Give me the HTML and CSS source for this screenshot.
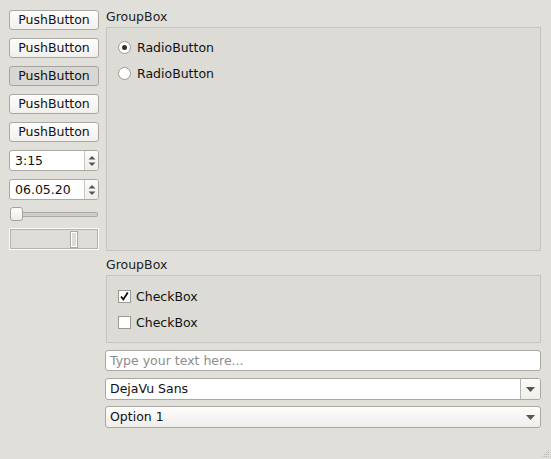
FILE: index.html
```html
<!DOCTYPE html>
<html>
<head>
<meta charset="utf-8">
<link rel="stylesheet" href="styles.css">
</head>
<body>
<div class="window">
  <div class="left">
    <button class="btn">PushButton</button>
    <button class="btn">PushButton</button>
    <button class="btn pressed">PushButton</button>
    <button class="btn">PushButton</button>
    <button class="btn">PushButton</button>
    <div class="spin"><span class="spin-text">3:15</span><span class="spin-arrows"><svg width="8" height="14" viewBox="0 0 8 14"><path d="M0.5 5.5 L4 2 L7.5 5.5Z" fill="#555"/><path d="M0.5 8.5 L4 12 L7.5 8.5Z" fill="#555"/></svg></span></div>
    <div class="spin"><span class="spin-text">06.05.20</span><span class="spin-arrows"><svg width="8" height="14" viewBox="0 0 8 14"><path d="M0.5 5.5 L4 2 L7.5 5.5Z" fill="#555"/><path d="M0.5 8.5 L4 12 L7.5 8.5Z" fill="#555"/></svg></span></div>
    <div class="slider"><div class="groove"></div><div class="handle"></div></div>
    <div class="scroll"><div class="scroll-handle"></div></div>
  </div>
  <div class="right">
    <div class="group">
      <div class="group-title">GroupBox</div>
      <div class="group-frame frame1">
        <label class="opt"><span class="radio checked"><span class="dot"></span></span>RadioButton</label>
        <label class="opt"><span class="radio"></span>RadioButton</label>
      </div>
    </div>
    <div class="group">
      <div class="group-title">GroupBox</div>
      <div class="group-frame frame2">
        <label class="opt"><span class="check"><svg width="11" height="11" viewBox="0 0 11 11"><path d="M2 5.5 L4.3 8.5 L8.8 1.5" fill="none" stroke="#111" stroke-width="1.8"/></svg></span>CheckBox</label>
        <label class="opt"><span class="check"></span>CheckBox</label>
      </div>
    </div>
    <div class="lineedit">Type your text here...</div>
    <div class="combo editable"><span class="combo-text">DejaVu Sans</span><span class="combo-btn"><svg width="9" height="5" viewBox="0 0 9 5"><path d="M0 0 H9 L4.5 5Z" fill="#555"/></svg></span></div>
    <div class="combo plain"><span class="combo-text">Option 1</span><span class="combo-arrow"><svg width="9" height="5" viewBox="0 0 9 5"><path d="M0 0 H9 L4.5 5Z" fill="#555"/></svg></span></div>
  </div>
  <svg class="grip" width="9" height="9" viewBox="0 0 9 9"><g fill="#b5b4ae"><rect x="7" y="1" width="1" height="1"/><rect x="5" y="3" width="1" height="1"/><rect x="7" y="3" width="1" height="1"/><rect x="3" y="5" width="1" height="1"/><rect x="5" y="5" width="1" height="1"/><rect x="7" y="5" width="1" height="1"/><rect x="1" y="7" width="1" height="1"/><rect x="3" y="7" width="1" height="1"/><rect x="5" y="7" width="1" height="1"/><rect x="7" y="7" width="1" height="1"/></g></svg>
</div>
</body>
</html>
```

FILE: styles.css
```css
html, body {
  margin: 0;
  padding: 0;
  background: #e0dfd9;
}
body {
  font-family: "DejaVu Sans", sans-serif;
  font-size: 12.5px;
  color: #111;
}
.window {
  position: relative;
  width: 551px;
  height: 459px;
  display: flex;
  box-sizing: border-box;
  padding: 10px 0 0 9px;
  gap: 6px;
}
.left {
  width: 90px;
  display: flex;
  flex-direction: column;
}
.btn {
  font: inherit;
  color: #111;
  height: 20px;
  margin: 0 0 8px 0;
  padding: 0 0 1px 0;
  border: 1px solid #a9a8a3;
  border-radius: 3px;
  background: linear-gradient(#fdfdfc, #f1f0ed);
  text-align: center;
}
.btn.pressed {
  background: #d8d7d2;
  border-color: #a5a49f;
}
.spin {
  height: 21px;
  box-sizing: border-box;
  border: 1px solid #a9a8a3;
  border-radius: 3px;
  background: #fff;
  display: flex;
  margin-bottom: 8px;
}
.spin-text {
  flex: 1;
  padding-left: 5px;
  line-height: 19px;
}
.spin-arrows {
  width: 13px;
  border-left: 1px solid #c8c7c2;
  background: linear-gradient(#fbfbfa, #eeede9);
  display: flex;
  align-items: center;
  justify-content: center;
  border-radius: 0 2px 2px 0;
}
.slider {
  position: relative;
  height: 16px;
  margin-top: -1px;
  margin-bottom: 5px;
}
.groove {
  position: absolute;
  left: 1px;
  right: 1px;
  top: 5px;
  height: 3px;
  border: 1px solid #a9a8a3;
  border-radius: 2px;
  background: #cfcec9;
}
.handle {
  position: absolute;
  left: 1px;
  top: 0;
  width: 11px;
  height: 12px;
  border: 1px solid #a3a29d;
  border-radius: 3px;
  background: linear-gradient(#fdfdfc, #eeede9);
}
.scroll {
  position: relative;
  height: 22px;
  box-sizing: border-box;
  border: 1px solid #fbfbfa;
  outline: 1px solid #b4b3ae;
  outline-offset: -2px;
  background: #dddcd6;
}
.scroll-handle {
  position: absolute;
  left: 60px;
  top: 2px;
  width: 6px;
  height: 15px;
  border: 1px solid #a9a8a3;
  outline: 1px solid #fff;
  outline-offset: -2px;
}
.right {
  width: 436px;
  display: flex;
  flex-direction: column;
}
.group-title {
  height: 17px;
  line-height: 14px;
  padding-left: 1px;
  color: #222;
}
.group-frame {
  margin-left: 1px;
  border: 1px solid #c6c5c0;
  background: #dcdbd5;
  box-sizing: border-box;
  padding: 10px 0 0 11px;
}
.frame1 {
  height: 224px;
  margin-bottom: 7px;
}
.frame2 {
  height: 68px;
  padding-top: 11px;
  margin-bottom: 7px;
}
.opt {
  display: flex;
  align-items: center;
  height: 18px;
  margin-bottom: 8px;
}
.radio {
  width: 11px;
  height: 11px;
  border: 1px solid #9a9994;
  border-radius: 50%;
  background: #fff;
  margin-right: 6px;
  display: flex;
  align-items: center;
  justify-content: center;
}
.radio .dot {
  width: 5px;
  height: 5px;
  border-radius: 50%;
  background: #333;
}
.check {
  width: 11px;
  height: 11px;
  border: 1px solid #9a9994;
  background: #fff;
  margin-right: 5px;
  display: flex;
  align-items: center;
  justify-content: center;
}
.frame2 .opt {
  margin-bottom: 8px;
}
.lineedit {
  height: 21px;
  box-sizing: border-box;
  border: 1px solid #a9a8a3;
  border-radius: 3px;
  background: #fff;
  color: #8c8c8c;
  padding-left: 4px;
  line-height: 19px;
  margin-bottom: 7px;
}
.combo {
  height: 22px;
  box-sizing: border-box;
  border: 1px solid #a9a8a3;
  border-radius: 3px;
  display: flex;
  align-items: stretch;
  margin-bottom: 6px;
}
.combo.editable {
  background: #fff;
}
.combo.plain {
  background: linear-gradient(#fdfdfc, #efeeeb);
}
.combo-text {
  flex: 1;
  padding-left: 4px;
  line-height: 20px;
}
.combo-btn {
  width: 19px;
  border-left: 1px solid #b6b5b0;
  background: linear-gradient(#fbfbfa, #efeeea);
  display: flex;
  align-items: center;
  justify-content: center;
  border-radius: 0 2px 2px 0;
}
.combo-arrow {
  width: 19px;
  display: flex;
  align-items: center;
  justify-content: center;
}
.grip {
  position: absolute;
  right: 1px;
  bottom: 1px;
}
```
